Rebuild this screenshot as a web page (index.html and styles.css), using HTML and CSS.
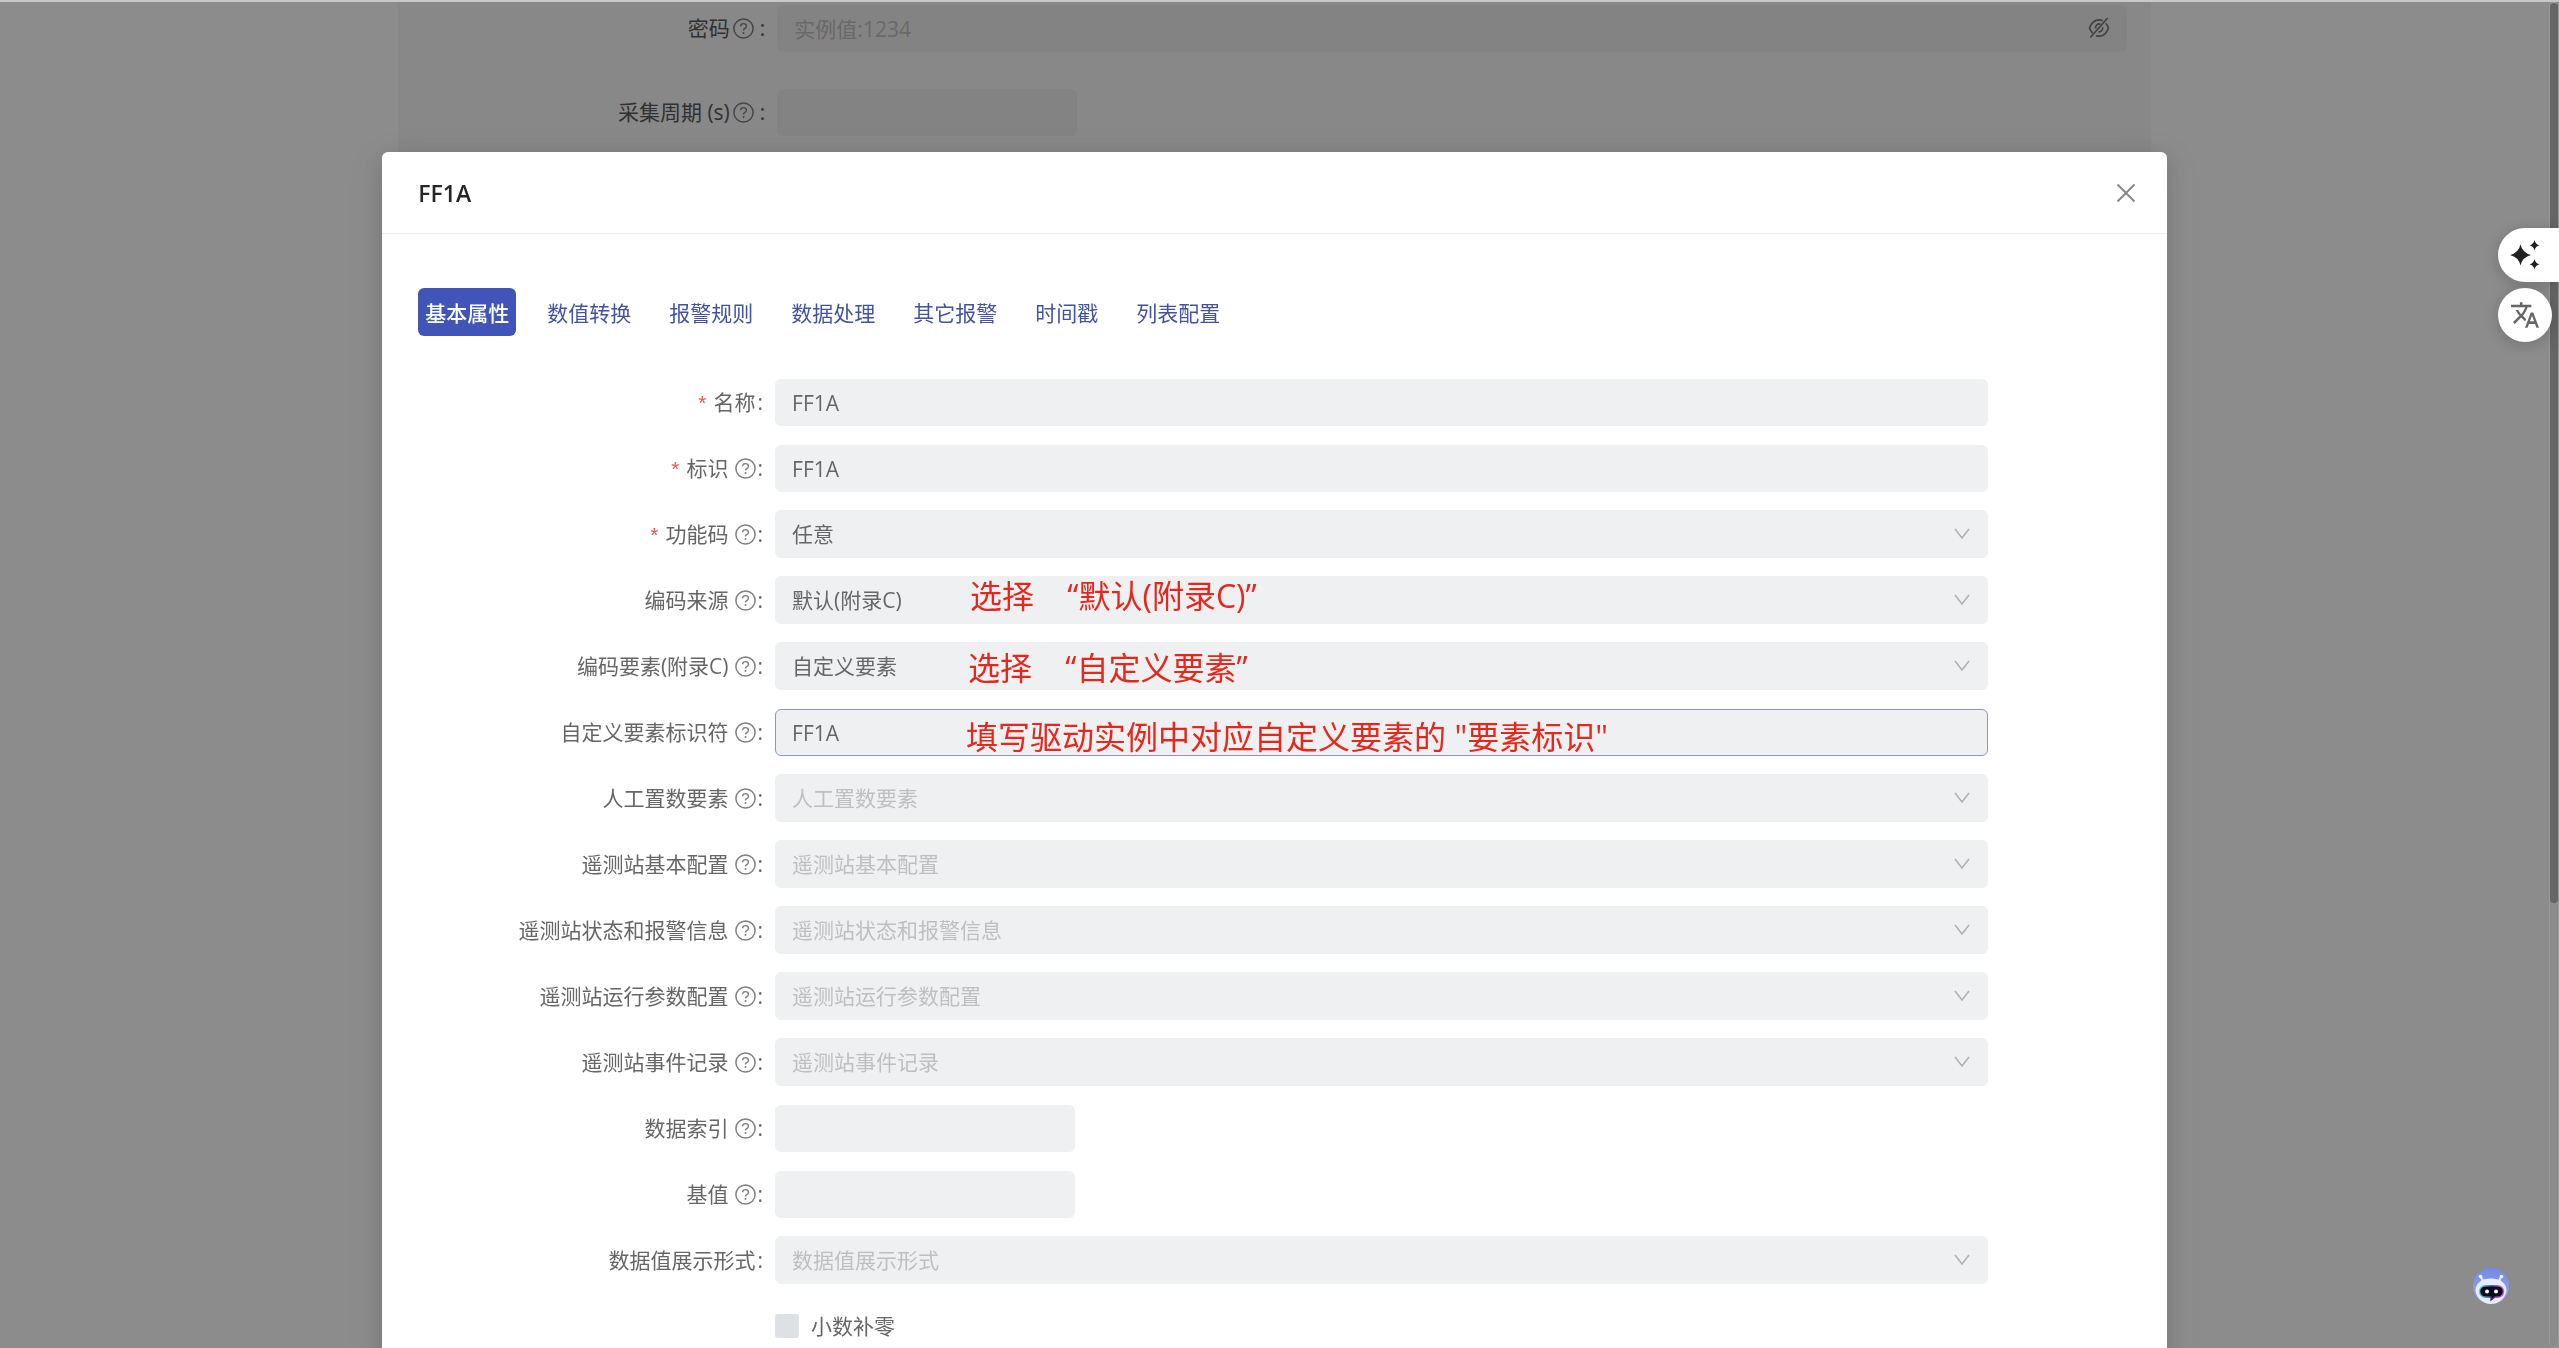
FILE: index.html
```html
<!DOCTYPE html>
<html lang="zh-CN">
<head>
<meta charset="utf-8">
<title>FF1A</title>
<link rel="stylesheet" href="styles.css">
</head>
<body>
<svg class="defs" aria-hidden="true">
  <symbol id="help" viewBox="0 0 21 21">
    <circle cx="10.500" cy="10.500" r="9.600" fill="none" stroke="currentColor" stroke-width="1.500"/>
    <path d="M7.600 8.300c0-1.700 1.300-2.700 2.900-2.700s2.900 1 2.900 2.600c0 1.300-.8 1.900-1.700 2.400-.8.500-1.200.9-1.200 1.900" fill="none" stroke="currentColor" stroke-width="1.400"/>
    <circle cx="10.500" cy="15" r="1" fill="currentColor"/>
  </symbol>
  <symbol id="down" viewBox="0 0 16 12">
    <path d="M1 1l7 9 7-9" fill="none" stroke="currentColor" stroke-width="1.600"/>
  </symbol>
</svg>

<main class="page">
  <form class="card">
    <div class="row">
      <label class="label label-page" for="pwd">密码<svg class="help"><use href="#help"/></svg><span class="colon">:</span></label>
      <div class="field">
        <input class="input" id="pwd" type="text" placeholder="实例值:1234">
        <button class="eye" type="button" aria-label="显示密码">
          <svg viewBox="0 0 22 22" fill="none" stroke="currentColor" stroke-width="1.700">
            <path d="M14.800 3.700C13.600 3.100 12.400 2.800 11 2.800 6.500 2.800 3.300 6 1.500 11c.8 2.100 1.800 3.800 3.100 5.100M8 18.700c.9.300 1.900.5 3 .5 4.500 0 7.700-3.200 9.500-8.200-.7-1.900-1.600-3.400-2.700-4.700"/>
            <path d="M12.500 7.200c-2.900-.9-5.400 1.300-5 4.300M10.500 14.800c2.500.3 4.600-1.800 4.200-4.500M2.300 20.500L19.700 1"/>
          </svg>
        </button>
      </div>
    </div>
    <div class="row">
      <label class="label label-page" for="cycle">采集周期 (s)<svg class="help"><use href="#help"/></svg><span class="colon">:</span></label>
      <div class="field"><input class="input short" id="cycle" type="text"></div>
    </div>
  </form>
</main>

<div class="mask">
  <div class="topline"></div>
  <section class="modal" role="dialog" aria-labelledby="title">
    <header class="head">
      <h1 class="title" id="title">FF1A</h1>
      <button class="close" type="button" aria-label="关闭"><svg viewBox="0 0 20 20"><path d="M1.500 1.500l17 17M18.500 1.500l-17 17" stroke="currentColor" stroke-width="1.900"/></svg></button>
    </header>
    <div class="content">
      <nav class="tabs">
        <a class="tab active" href="#basic">基本属性</a>
        <a class="tab" href="#convert">数值转换</a>
        <a class="tab" href="#rule">报警规则</a>
        <a class="tab" href="#process">数据处理</a>
        <a class="tab" href="#other">其它报警</a>
        <a class="tab" href="#time">时间戳</a>
        <a class="tab" href="#list">列表配置</a>
      </nav>
      <form class="form">
        <div class="row">
          <label class="label" for="f1"><span class="star">*</span>名称<span class="colon">:</span></label>
          <div class="field"><input class="input" id="f1" type="text" value="FF1A"></div>
        </div>
        <div class="row">
          <label class="label" for="f2"><span class="star">*</span>标识<svg class="help"><use href="#help"/></svg><span class="colon">:</span></label>
          <div class="field"><input class="input" id="f2" type="text" value="FF1A"></div>
        </div>
        <div class="row">
          <label class="label" for="f3"><span class="star">*</span>功能码<svg class="help"><use href="#help"/></svg><span class="colon">:</span></label>
          <div class="field"><select class="select" id="f3"><option>任意</option></select><svg class="down"><use href="#down"/></svg></div>
        </div>
        <div class="row">
          <label class="label" for="f4">编码来源<svg class="help"><use href="#help"/></svg><span class="colon">:</span></label>
          <div class="field"><select class="select" id="f4"><option>默认(附录C)</option></select><svg class="down"><use href="#down"/></svg>
            <span class="note note-source">选择&nbsp;&nbsp;&nbsp; “默认(附录C)”</span></div>
        </div>
        <div class="row">
          <label class="label" for="f5">编码要素(附录C)<svg class="help"><use href="#help"/></svg><span class="colon">:</span></label>
          <div class="field"><select class="select" id="f5"><option>自定义要素</option></select><svg class="down"><use href="#down"/></svg>
            <span class="note note-element">选择&nbsp;&nbsp;&nbsp; “自定义要素”</span></div>
        </div>
        <div class="row">
          <label class="label" for="f6">自定义要素标识符<svg class="help"><use href="#help"/></svg><span class="colon">:</span></label>
          <div class="field"><input class="input current" id="f6" type="text" value="FF1A">
            <span class="note note-id">填写驱动实例中对应自定义要素的 "要素标识"</span></div>
        </div>
        <div class="row">
          <label class="label" for="f7">人工置数要素<svg class="help"><use href="#help"/></svg><span class="colon">:</span></label>
          <div class="field"><select class="select empty" id="f7"><option>人工置数要素</option></select><svg class="down"><use href="#down"/></svg></div>
        </div>
        <div class="row">
          <label class="label" for="f8">遥测站基本配置<svg class="help"><use href="#help"/></svg><span class="colon">:</span></label>
          <div class="field"><select class="select empty" id="f8"><option>遥测站基本配置</option></select><svg class="down"><use href="#down"/></svg></div>
        </div>
        <div class="row">
          <label class="label" for="f9">遥测站状态和报警信息<svg class="help"><use href="#help"/></svg><span class="colon">:</span></label>
          <div class="field"><select class="select empty" id="f9"><option>遥测站状态和报警信息</option></select><svg class="down"><use href="#down"/></svg></div>
        </div>
        <div class="row">
          <label class="label" for="f10">遥测站运行参数配置<svg class="help"><use href="#help"/></svg><span class="colon">:</span></label>
          <div class="field"><select class="select empty" id="f10"><option>遥测站运行参数配置</option></select><svg class="down"><use href="#down"/></svg></div>
        </div>
        <div class="row">
          <label class="label" for="f11">遥测站事件记录<svg class="help"><use href="#help"/></svg><span class="colon">:</span></label>
          <div class="field"><select class="select empty" id="f11"><option>遥测站事件记录</option></select><svg class="down"><use href="#down"/></svg></div>
        </div>
        <div class="row">
          <label class="label" for="f12">数据索引<svg class="help"><use href="#help"/></svg><span class="colon">:</span></label>
          <div class="field"><input class="input short" id="f12" type="text"></div>
        </div>
        <div class="row">
          <label class="label" for="f13">基值<svg class="help"><use href="#help"/></svg><span class="colon">:</span></label>
          <div class="field"><input class="input short" id="f13" type="text"></div>
        </div>
        <div class="row">
          <label class="label" for="f14">数据值展示形式<span class="colon">:</span></label>
          <div class="field"><select class="select empty" id="f14"><option>数据值展示形式</option></select><svg class="down"><use href="#down"/></svg></div>
        </div>
        <div class="row">
          <span class="label"></span>
          <div class="field"><label class="check"><input class="box" type="checkbox">小数补零</label></div>
        </div>
      </form>
    </div>
  </section>
</div>

<div class="scroll"><div class="thumb"></div></div>

<aside class="tools">
  <button class="tool tool-ai" type="button" aria-label="AI">
    <svg viewBox="0 0 30 30" fill="#222"><path d="M10.500 4.500Q12.500 13 21 15Q12.500 17 10.500 25.500Q8.500 17 0 15Q8.500 13 10.500 4.500ZM24.500 0Q25.500 4.500 29.500 5.300Q25.500 6.100 24.500 10.500Q23.500 6.100 19.500 5.300Q23.500 4.500 24.500 0ZM24.500 19Q25.500 23.500 29.500 24.300Q25.500 25.100 24.500 29.500Q23.500 25.100 19.500 24.300Q23.500 23.500 24.500 19Z"/></svg>
  </button>
  <button class="tool tool-tr" type="button" aria-label="翻译">
    <svg viewBox="1 2 22 20" fill="#666"><path d="M12.870 15.070l-2.540-2.510.03-.03c1.740-1.940 2.980-4.170 3.710-6.530H17V4h-7V2H8v2H1v1.990h11.170C11.500 7.920 10.440 9.750 9 11.350 8.070 10.320 7.300 9.190 6.690 8h-2c.73 1.630 1.730 3.170 2.980 4.560l-5.090 5.020L4 19l5-5 3.110 3.110.76-2.040zM18.500 10h-2L12 22h2l1.120-3h4.750L21 22h2l-4.500-12zm-2.620 7l1.620-4.330L19.120 17h-3.240z"/></svg>
  </button>
</aside>

<button class="bot" type="button" aria-label="助手">
  <svg viewBox="0 0 38 38">
    <defs>
      <linearGradient id="sky" x1="0" y1="0" x2="0" y2="1"><stop offset="0" stop-color="#7389e4"/><stop offset="1" stop-color="#9aa9f5"/></linearGradient>
      <linearGradient id="rim" x1="0" x2="1"><stop offset="0" stop-color="#4fd8dc"/><stop offset=".5" stop-color="#3a2a8a"/><stop offset="1" stop-color="#d44fe0"/></linearGradient>
    </defs>
    <circle cx="19" cy="19" r="18" fill="url(#sky)"/>
    <path d="M8.500 9l3 6M29.500 9l-3 6" stroke="#e6eaff" stroke-width="2.200"/>
    <circle cx="8.500" cy="9.500" r="1.800" fill="#f2f4ff"/><circle cx="29.500" cy="9.500" r="1.800" fill="#f2f4ff"/>
    <path d="M19 11.500c9 0 15.500 4.500 15.500 12-1 8-8 13.500-15.500 13.500S4.500 31.500 3.500 23.500c0-7.500 6.500-12 15.500-12z" fill="#e9edff"/>
    <path d="M13 19h13a5.500 5.500 0 0 1 0 11h-3l-4 3v-3h-6a5.500 5.500 0 0 1 0-11z" fill="#0c0a20" stroke="url(#rim)" stroke-width="1.400"/>
    <circle cx="15" cy="24.500" r="2" fill="#fff"/><circle cx="24" cy="24.500" r="2" fill="#fff"/>
  </svg>
</button>
</body>
</html>
```
FILE: styles.css
```css
* { box-sizing: border-box; }

body {
  margin: 0;
  height: 100vh;
  overflow: hidden;
  background: #fff;
  color: #666;
  font: 21px/32px "Open Sans", "Noto Sans CJK SC", sans-serif;
}

button { border: 0; padding: 0; background: none; color: inherit; }
svg { display: block; }
.defs { position: absolute; width: 0; height: 0; }

/* form page below the dialog */
.page { padding-right: 10px; }
.card {
  display: flex;
  flex-direction: column;
  gap: 36px;
  width: 68.75%;
  margin: 0 auto;
  padding: 4px 24px 1000px;
  background: #f8f8f8;
}

.row { display: flex; align-items: center; height: 48px; }
.label {
  flex: none;
  width: calc(100% * 5 / 24);
  display: flex;
  align-items: center;
  justify-content: flex-end;
  padding: 0 12px 0 0;
  white-space: nowrap;
}
.label-page { color: #595959; }
.label-page .help { margin-left: 3px; }
.label-page .colon { margin-left: 6px; }
.star {
  height: 32px;
  margin-right: 5px;
  color: #f0524f;
  font-family: "Liberation Mono", monospace;
  line-height: 40px;
}
.help { width: 21px; height: 21px; margin-left: 6px; color: #808080; }
.colon { margin-left: 2px; }
.field { position: relative; flex: 1; align-self: flex-end; display: flex; }
.form .field { flex: none; width: calc(100% * 17 / 24); }

.input, .select {
  width: 100%;
  height: 47px;
  padding: 0 16px;
  border: 1px solid transparent;
  border-radius: 6px;
  background: #eff0f2;
  color: #666;
  font: inherit;
  outline: 0;
}
.select { height: 48px; appearance: none; }
.card .input { background: #efefef; }
.input::placeholder { color: #bfbfbf; opacity: 1; }
.select.empty { color: #bfbfbf; }
.input.short { width: 300px; }
.input.current { border-color: #8b96c4; }
.down {
  position: absolute;
  right: 18px;
  top: 18px;
  width: 16px;
  height: 12px;
  color: #b0b1b3;
  pointer-events: none;
}
.eye { position: absolute; right: 17px; top: 12px; color: #777; }
.eye svg { width: 22px; height: 22px; }

/* dialog */
.mask {
  position: fixed;
  inset: 0;
  overflow: hidden;
  padding-right: 10px;
  background: rgba(0, 0, 0, 0.45);
}
.topline { height: 2px; margin-right: -10px; background: #c8c8c8; }
.modal {
  width: 70%;
  margin: 150px auto 0;
  border-radius: 6px;
  background: #fff;
  box-shadow: 0 9px 42px 12px rgba(0, 0, 0, 0.05), 0 4px 24px rgba(0, 0, 0, 0.12);
}
.head {
  display: flex;
  align-items: center;
  justify-content: space-between;
  height: 82px;
  padding: 0 31px 0 36px;
  border-bottom: 1px solid #ececec;
}
.title { margin: 0; color: #262626; font-size: 23px; font-weight: 600; line-height: 32px; }
.close { color: #858585; }
.close svg { width: 20px; height: 20px; }
.content { padding: 54px 36px 36px; }
.tabs { display: flex; gap: 24px; }
.tab {
  padding: 9px 7px 7px;
  border-radius: 6px;
  color: #4453a0;
  text-decoration: none;
}
.tab.active { background: #4154b8; color: #fff; font-weight: 500; }
.form { display: flex; flex-direction: column; gap: 18px; margin-top: 42px; }

.note {
  position: absolute;
  color: #e6281c;
  font-size: 32px;
  line-height: 40px;
  white-space: nowrap;
  pointer-events: none;
}
.note-source { left: 195px; top: 0; }
.note-element { left: 193px; top: 6px; }
.note-id { left: 191px; top: 8px; }

.check { display: flex; align-items: center; gap: 12px; height: 48px; }
.box {
  appearance: none;
  width: 24px;
  height: 24px;
  margin: 0;
  border-radius: 3px;
  background: #dde1e5;
}

/* page scrollbar */
.scroll {
  position: fixed;
  top: 2px;
  right: 0;
  bottom: 0;
  width: 10px;
  border: 1px solid #999;
  border-radius: 5px;
  background: #8b8b8b;
}
.thumb { height: 67%; border-radius: 4px; background: #656565; }

/* floating tools */
.tools {
  position: fixed;
  top: 228px;
  right: 0;
  display: flex;
  flex-direction: column;
  gap: 6px;
}
.tool {
  display: flex;
  align-items: center;
  background: #fff;
  height: 54px;
  padding-left: 12px;
  box-shadow: 0 3px 18px rgba(0, 0, 0, 0.2);
}
.tool-ai { width: 61px; border-radius: 27px 0 0 27px; }
.tool-ai svg { width: 30px; height: 30px; }
.tool-tr { width: 54px; padding-left: 13px; border-radius: 50%; }
.tool-tr svg { width: 28px; height: 26px; }
.bot { position: fixed; right: 49px; bottom: 43px; }
.bot svg { width: 38px; height: 38px; }
```
